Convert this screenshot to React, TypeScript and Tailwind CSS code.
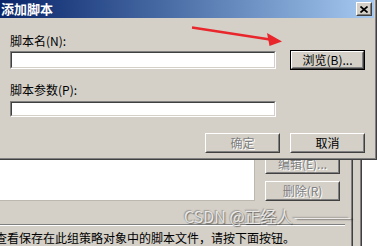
import React from "react";

const FONT = "font-['Noto_Sans_CJK_SC','Noto_Sans',sans-serif]";

function Btn({
  label,
  disabled,
  isDefault,
  className,
}: {
  label: string;
  disabled?: boolean;
  isDefault?: boolean;
  className?: string;
}) {
  const raised = (
    <div className="h-full w-full border border-t-white border-l-white border-r-[#404040] border-b-[#404040]">
      <div className="flex h-full w-full items-center justify-center border border-t-[#d4d0c8] border-l-[#d4d0c8] border-r-[#808080] border-b-[#808080] bg-[#d4d0c8]">
        <span
          className={
            disabled
              ? "whitespace-nowrap text-[#808080] [text-shadow:1px_1px_0_#ffffff]"
              : "whitespace-nowrap text-black"
          }
        >
          {label}
        </span>
      </div>
    </div>
  );
  return (
    <div className={`h-[20px] w-[75px] shrink-0 ${className ?? ""}`}>
      {isDefault ? <div className="h-full w-full border border-black">{raised}</div> : raised}
    </div>
  );
}

function Input({ h }: { h: string }) {
  return (
    <div className={`${h} w-[266px] shrink-0 border border-t-[#808080] border-l-[#808080] border-r-white border-b-white`}>
      <div className="h-full w-full border border-t-[#404040] border-l-[#404040] border-r-[#d4d0c8] border-b-[#d4d0c8] bg-white" />
    </div>
  );
}

export default function App() {
  return (
    <div
      className={`relative h-[246px] w-[380px] overflow-hidden bg-white text-[12px] leading-[14px] text-black ${FONT}`}
    >
      {/* background property window */}
      <div className="flex h-full">
        <div className="h-full w-[362px] border-r border-[#404040] bg-[#d4d0c8]">
          <div className="h-full w-[361px] border-r border-[#808080]">
            <div className="h-full w-[353px] border-r border-[#404040]">
              <div className="h-full w-[352px] border-r border-[#808080]">
                <div className="flex h-[201px]">
                  <div className="h-full w-[255px] border-r border-b border-[#bcb8b0] bg-white" />
                  <div className="ml-[10px] flex w-[75px] flex-col gap-[7px] pt-[154px]">
                    <Btn label="编辑(E)..." disabled />
                    <Btn label="删除(R)" disabled />
                  </div>
                </div>
                <div className="mt-[23px] w-[345px] border-t border-b border-t-[#808080] border-b-white" />
                <div className="ml-[-5px] mt-[5px] whitespace-nowrap">
                  查看保存在此组策略对象中的脚本文件，请按下面按钮。
                </div>
              </div>
            </div>
          </div>
        </div>
        <div className="flex-1" />
      </div>

      {/* dialog window */}
      <div className="absolute left-[-3px] top-[-3px] h-[163px] w-[380px] border border-t-[#d4d0c8] border-l-[#d4d0c8] border-r-[#404040] border-b-[#404040]">
        <div className="flex h-full w-full flex-col border border-t-white border-l-white border-r-[#808080] border-b-[#808080] bg-[#d4d0c8] p-px">
          <div className="flex h-[18px] shrink-0 items-center justify-between bg-linear-to-r from-[#0a246a] to-[#a6caf0] pl-[1px] pr-[2px]">
            <span className="whitespace-nowrap text-[13px] font-bold leading-[14px] text-white">添加脚本</span>
            <div className="h-[14px] w-[16px] border border-t-white border-l-white border-r-[#404040] border-b-[#404040]">
              <div className="flex h-full w-full items-center justify-center border border-t-[#d4d0c8] border-l-[#d4d0c8] border-r-[#808080] border-b-[#808080] bg-[#d4d0c8]">
                <svg width="8" height="7" viewBox="0 0 8 7">
                  <path d="M0.5 0.5 L7.5 6.5 M7.5 0.5 L0.5 6.5" stroke="#000" strokeWidth="1.7" fill="none" />
                </svg>
              </div>
            </div>
          </div>

          <div className="flex flex-col pl-[10px] pt-[16px]">
            <div className="whitespace-nowrap">脚本名(N):</div>
            <div className="mt-[2px] flex h-[20px] items-center">
              <Input h="h-[18px]" />
              <Btn label="浏览(B)..." isDefault className="ml-[14px]" />
            </div>
            <div className="mt-[13px] whitespace-nowrap">脚本参数(P):</div>
            <div className="mt-[4px]">
              <Input h="h-[16px]" />
            </div>
            <div className="mt-[16px] flex justify-end gap-[10px] pr-[9px]">
              <Btn label="确定" disabled />
              <Btn label="取消" />
            </div>
          </div>
        </div>
      </div>

      {/* watermark */}
      <div className="pointer-events-none absolute left-[184px] top-[206px] whitespace-nowrap text-[16px] leading-[20px] text-[rgba(250,250,250,0.8)] [text-shadow:1px_1px_1px_rgba(0,0,0,0.45),-1px_-1px_1px_rgba(0,0,0,0.25)]">
        CSDN @正经人
        <span className="inline-block origin-left scale-x-[2.2]">——</span>
      </div>

      {/* red arrow */}
      <svg
        className="pointer-events-none absolute left-0 top-0"
        width="380"
        height="246"
        viewBox="0 0 380 246"
      >
        <line x1="192" y1="27.5" x2="270" y2="39.5" stroke="#e8262b" strokeWidth="2.6" />
        <polygon points="282,41.5 267,33 269.5,46" fill="#e8262b" />
      </svg>
    </div>
  );
}
